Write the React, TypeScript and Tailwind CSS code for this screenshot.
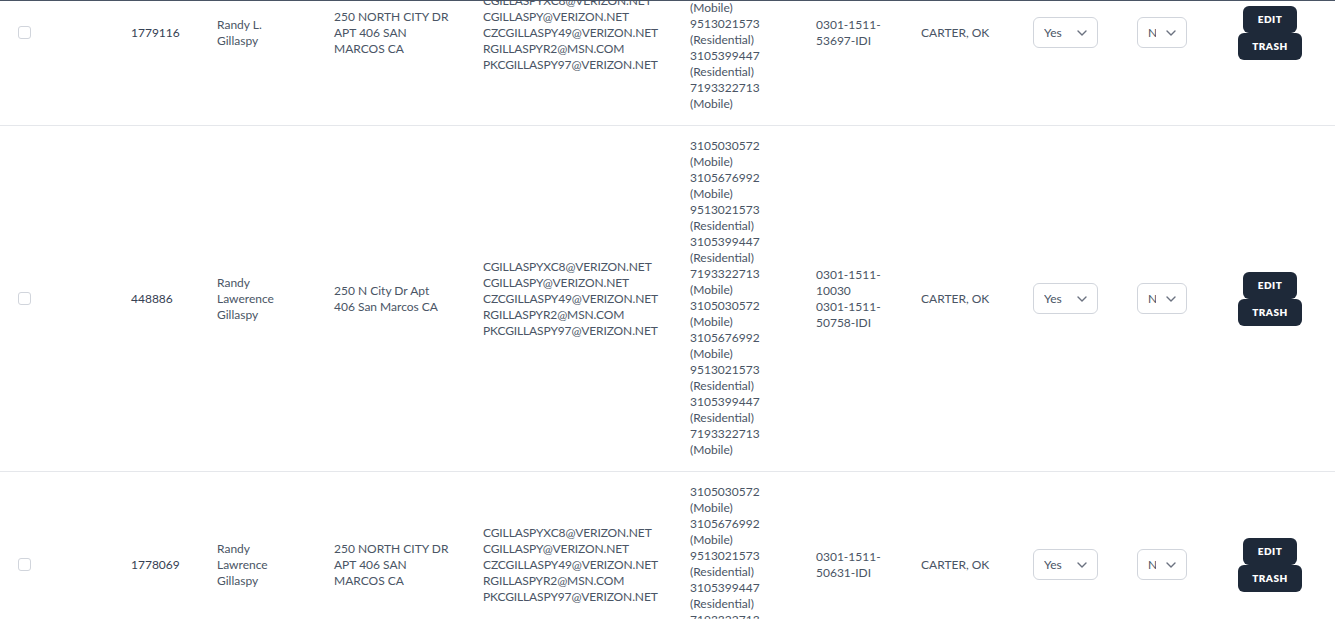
import { useState } from 'react';

interface Person {
  id: number;
  name: string[];
  address: string[];
  emails: string[];
  phones: [string, string][];
  cases: string[];
  county: string;
}

const emails = [
  'CGILLASPYXC8@VERIZON.NET',
  'CGILLASPY@VERIZON.NET',
  'CZCGILLASPY49@VERIZON.NET',
  'RGILLASPYR2@MSN.COM',
  'PKCGILLASPY97@VERIZON.NET',
];

const phoneSet: [string, string][] = [
  ['3105030572', 'Mobile'],
  ['3105676992', 'Mobile'],
  ['9513021573', 'Residential'],
  ['3105399447', 'Residential'],
  ['7193322713', 'Mobile'],
];

const people: Person[] = [
  {
    id: 1779116,
    name: ['Randy L.', 'Gillaspy'],
    address: ['250 NORTH CITY DR', 'APT 406 SAN', 'MARCOS CA'],
    emails,
    phones: phoneSet,
    cases: ['0301-1511-', '53697-IDI'],
    county: 'CARTER, OK',
  },
  {
    id: 448886,
    name: ['Randy', 'Lawerence', 'Gillaspy'],
    address: ['250 N City Dr Apt', '406 San Marcos CA'],
    emails,
    phones: [...phoneSet, ...phoneSet],
    cases: ['0301-1511-', '10030', '0301-1511-', '50758-IDI'],
    county: 'CARTER, OK',
  },
  {
    id: 1778069,
    name: ['Randy', 'Lawrence', 'Gillaspy'],
    address: ['250 NORTH CITY DR', 'APT 406 SAN', 'MARCOS CA'],
    emails,
    phones: phoneSet,
    cases: ['0301-1511-', '50631-IDI'],
    county: 'CARTER, OK',
  },
];

const Lines = ({ items }: { items: string[] }) => (
  <div className="whitespace-nowrap">
    {items.map((t, i) => (
      <div key={i}>{t}</div>
    ))}
  </div>
);

const Chevron = () => (
  <svg width="10" height="10" viewBox="0 0 10 10" fill="none" className="shrink-0">
    <path d="M1 3l4 4 4-4" stroke="#6b7280" strokeWidth="1.4" strokeLinecap="round" strokeLinejoin="round" />
  </svg>
);

const FakeSelect = ({ value, wide }: { value: string; wide?: boolean }) => (
  <div
    className={
      wide
        ? 'w-[65px] h-[31px] border border-gray-300 rounded-md bg-white flex items-center pl-[10px] pr-[10px] gap-2'
        : 'w-[50px] h-[31px] border border-gray-300 rounded-md bg-white flex items-center pl-[10px] pr-[10px] gap-[10px]'
    }
  >
    <span className="flex-1 overflow-hidden whitespace-nowrap text-gray-600">{value}</span>
    <Chevron />
  </div>
);

function Row({ p }: { p: Person }) {
  const [checked, setChecked] = useState(false);
  return (
    <tr className="border-b border-gray-200 align-middle">
      <td className="pl-[18px] py-3">
        <input
          type="checkbox"
          title="Select"
          checked={checked}
          onChange={e => setChecked(e.target.checked)}
          className="appearance-none block w-[13px] h-[13px] border border-gray-300 rounded-[3px] bg-white checked:bg-gray-800"
        />
      </td>
      <td className="px-4 py-3 text-gray-700">{p.id}</td>
      <td className="px-4 py-3">
        <Lines items={p.name} />
      </td>
      <td className="px-4 py-3">
        <Lines items={p.address} />
      </td>
      <td className="px-4 py-3 tracking-[-0.01em]">
        <Lines items={p.emails} />
      </td>
      <td className="px-4 pt-3 pb-[13px]">
        <div className="whitespace-nowrap">
          {p.phones.map(([num, kind], i) => (
            <div key={i}>
              <div>{num}</div>
              <div>({kind})</div>
            </div>
          ))}
        </div>
      </td>
      <td className="px-4 py-3">
        <Lines items={p.cases} />
      </td>
      <td className="px-4 py-3 whitespace-nowrap">{p.county}</td>
      <td className="px-4 py-3">
        <FakeSelect value="Yes" wide />
      </td>
      <td className="px-4 py-3">
        <FakeSelect value="No" />
      </td>
      <td className="py-3">
        <div className="flex flex-col items-center pl-[2px]">
          <button className="bg-gray-800 text-white font-extrabold text-[10px] leading-[11px] tracking-wider px-[15px] py-2 rounded-md">
            EDIT
          </button>
          <button className="bg-gray-800 text-white font-extrabold text-[10px] leading-[11px] tracking-wider px-[14px] py-2 rounded-md">
            TRASH
          </button>
        </div>
      </td>
    </tr>
  );
}

export default function App() {
  return (
    <div className="h-[619px] overflow-hidden bg-white font-['Lato','Liberation_Sans',sans-serif] text-xs leading-4 text-gray-600">
      <div className="border-t border-gray-600" />
      <div className="-mt-[61px]">
        <table className="w-[1335px] table-fixed border-collapse">
          <colgroup>
            <col className="w-[115px]" />
            <col className="w-[86px]" />
            <col className="w-[117px]" />
            <col className="w-[149px]" />
            <col className="w-[207px]" />
            <col className="w-[126px]" />
            <col className="w-[105px]" />
            <col className="w-[112px]" />
            <col className="w-[104px]" />
            <col className="w-[82px]" />
            <col className="w-[132px]" />
          </colgroup>
          <tbody>
            {people.map(p => (
              <Row key={p.id} p={p} />
            ))}
          </tbody>
        </table>
      </div>
    </div>
  );
}
